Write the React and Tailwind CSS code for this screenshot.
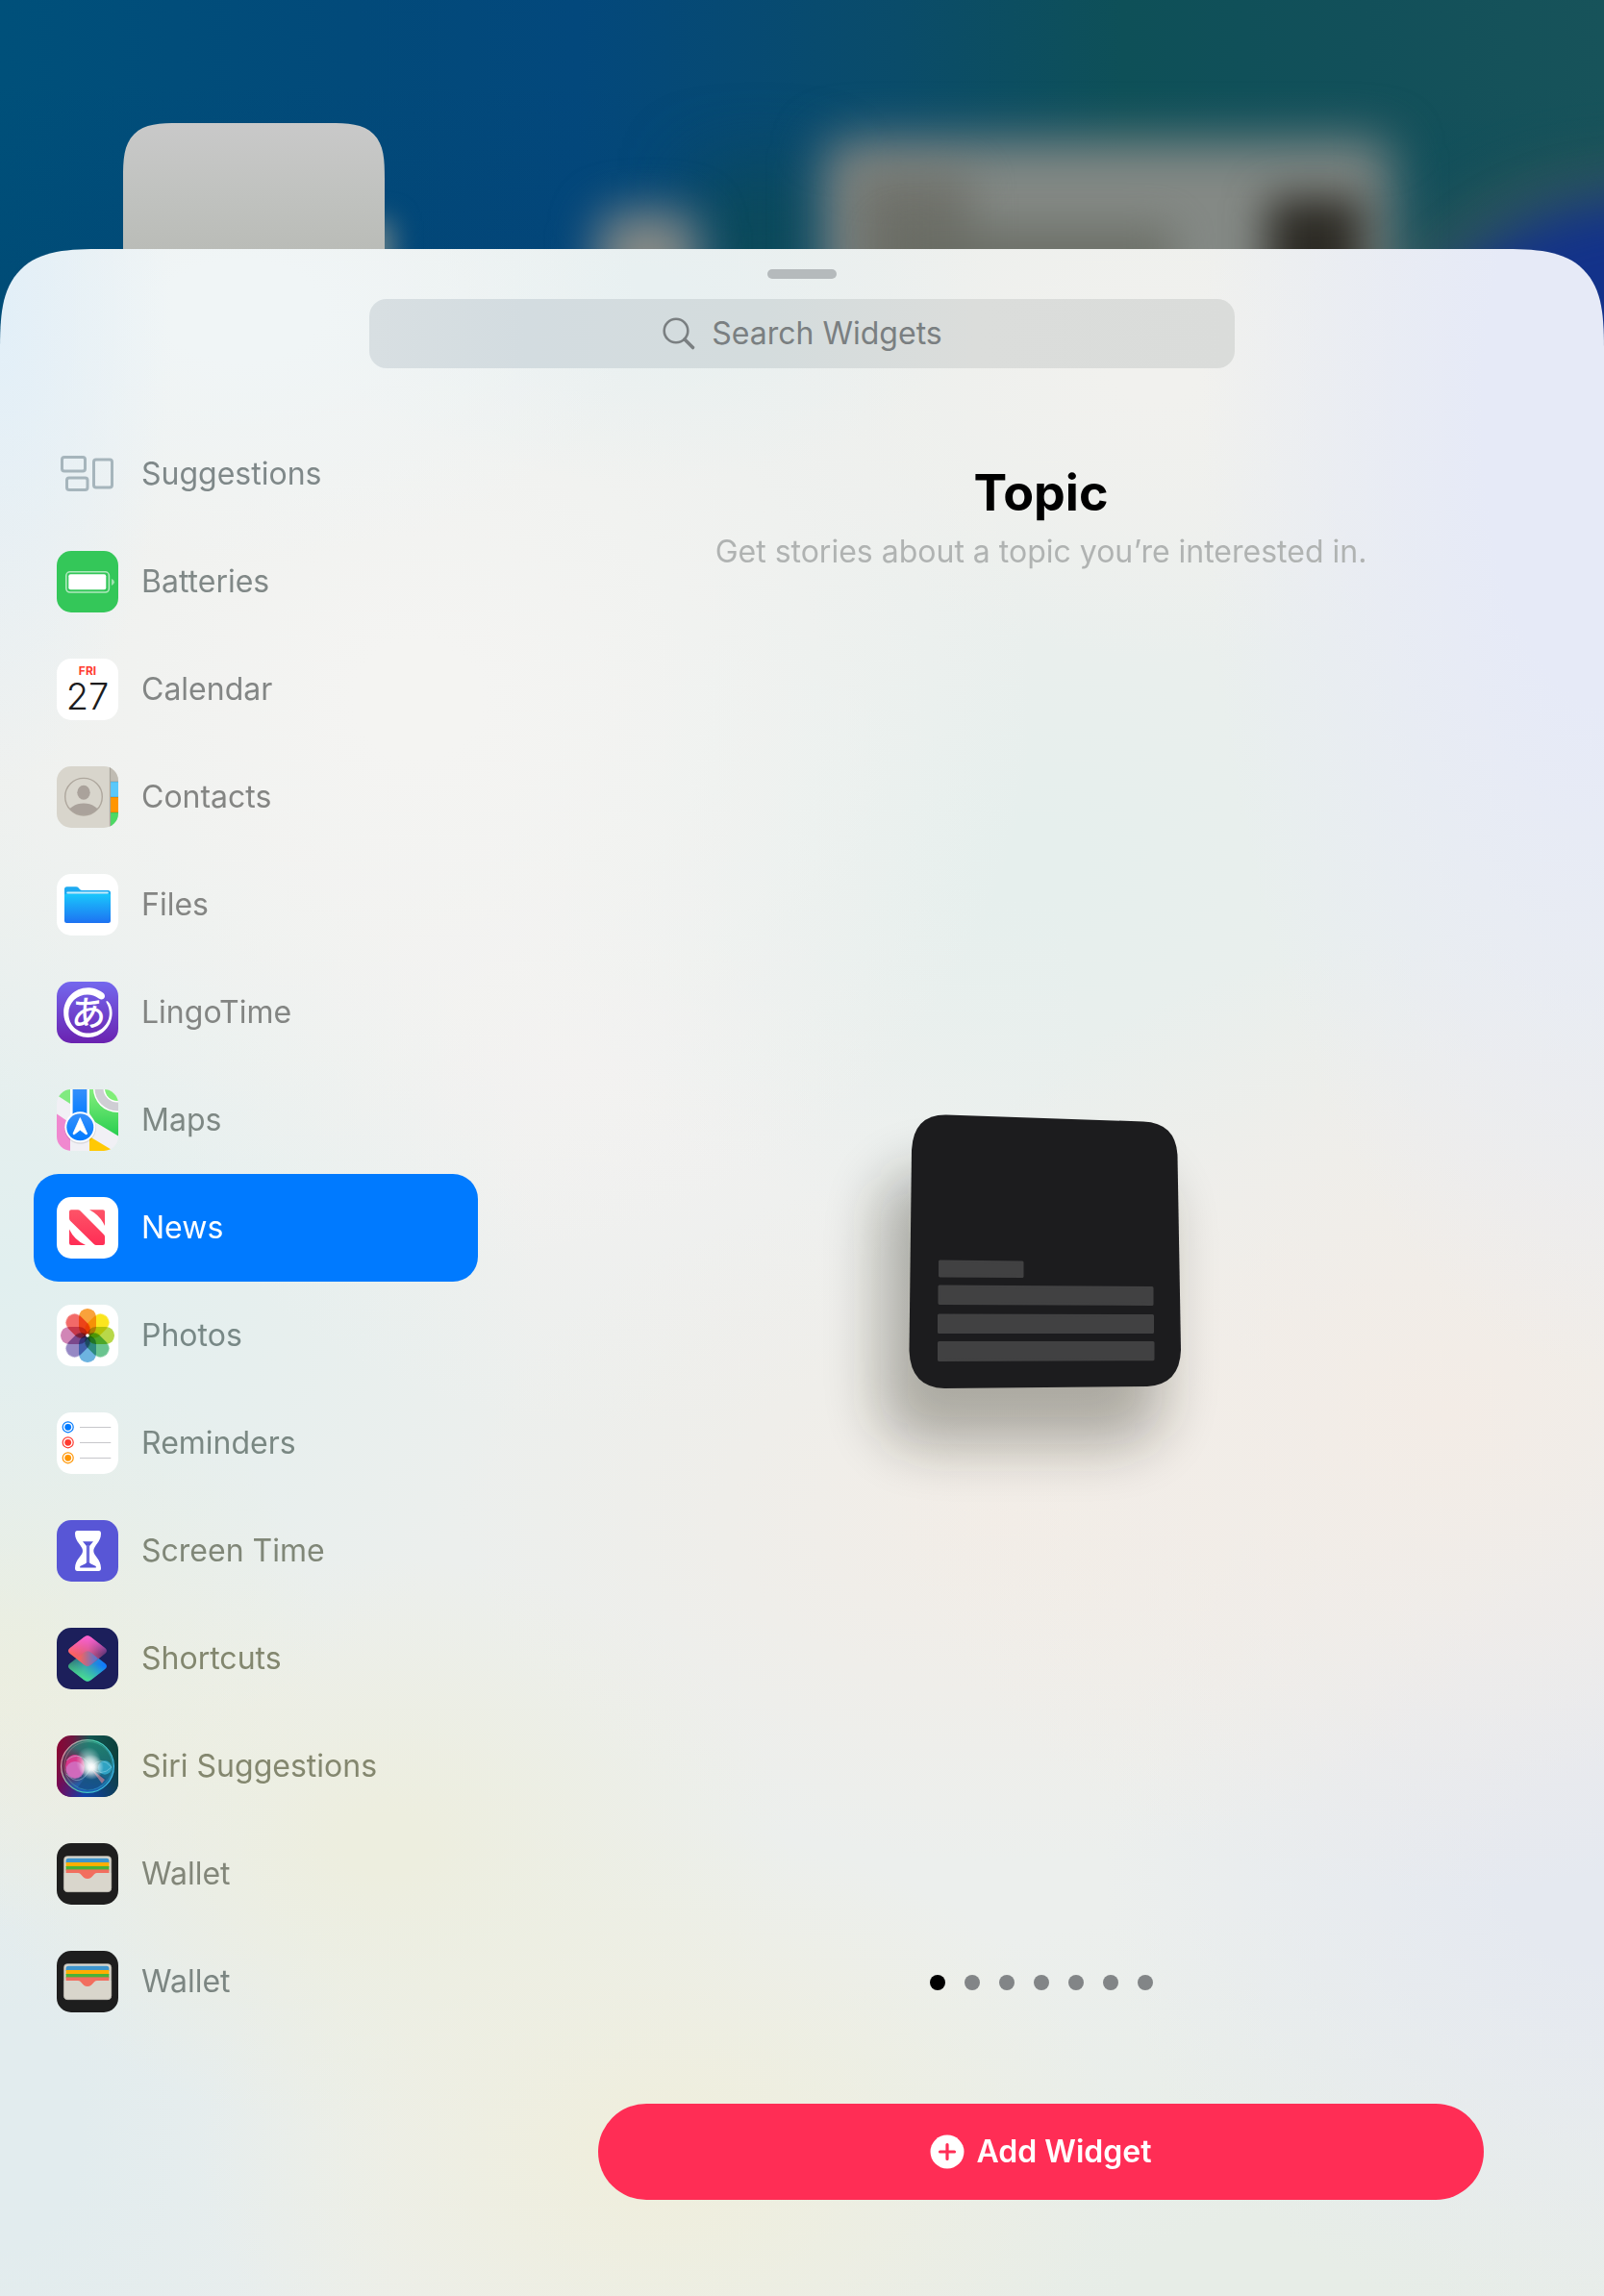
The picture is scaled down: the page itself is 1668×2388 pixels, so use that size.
import React from "react";

function Tile({ children }) {
  return (
    <svg viewBox="0 0 64 64" className="size-16 shrink-0 rounded-[15px]" aria-hidden="true">
      {children}
    </svg>
  );
}

function SuggestionsIcon() {
  return (
    <Tile>
      <g fill="none" stroke="#a6b5bc" strokeWidth="3">
        <rect x="5.5" y="14.5" width="24" height="14.5" rx="2.5" />
        <rect x="38.5" y="17" width="19" height="29" rx="2.5" />
        <rect x="10.5" y="36" width="21.5" height="12.5" rx="2.5" />
      </g>
    </Tile>
  );
}

function BatteriesIcon() {
  return (
    <Tile>
      <rect width="64" height="64" fill="#34c759" />
      <rect x="9.8" y="21.8" width="44.6" height="21.2" rx="4" fill="none" stroke="#b0e9be" strokeWidth="1.6" />
      <rect x="12.3" y="24.3" width="39" height="16" rx="2" fill="#fff" />
      <path d="M57 29 Q60 30.5 60 32.4 Q60 34.3 57 36 Z" fill="#a0e3b0" />
    </Tile>
  );
}

function CalendarIcon() {
  return (
    <Tile>
      <rect width="64" height="64" fill="#fff" />
      <text x="32" y="17" textAnchor="middle" fill="#ff3b30" fontFamily="Inter, sans-serif" fontSize="12" fontWeight="700">
        FRI
      </text>
      <text x="32" y="53" textAnchor="middle" fill="#1c1c1e" fontFamily="Inter, sans-serif" fontSize="38" fontWeight="300">
        27
      </text>
    </Tile>
  );
}

function ContactsIcon() {
  return (
    <Tile>
      <defs>
        <clipPath id="contactHead">
          <circle cx="28" cy="31.7" r="19" />
        </clipPath>
      </defs>
      <rect width="64" height="64" fill="#d8d5cc" />
      <circle cx="28" cy="31.7" r="19.3" fill="none" stroke="#aea79d" strokeWidth="1.4" />
      <ellipse cx="28" cy="27.3" rx="6.7" ry="7.5" fill="#aaa29b" />
      <ellipse cx="28" cy="49" rx="16" ry="10.4" fill="#aaa29b" clipPath="url(#contactHead)" />
      <rect x="55.4" width="9" height="16" fill="#c0bcb3" />
      <rect x="56" y="16" width="8" height="16" fill="#5ac8fa" />
      <rect x="56" y="32" width="8" height="16" fill="#ff9500" />
      <rect x="56" y="48" width="8" height="16" fill="#4cd964" />
      <path d="M55.5 0 V64" stroke="#a9a59c" strokeWidth="1.2" />
      <path d="M56 16 H64 M56 32 H64 M56 48 H64" stroke="#00000030" strokeWidth="0.8" />
    </Tile>
  );
}

function FilesIcon() {
  return (
    <Tile>
      <defs>
        <linearGradient id="folder" x1="0" y1="0" x2="0" y2="1">
          <stop offset="0" stopColor="#1ac8fc" />
          <stop offset="1" stopColor="#1d72f2" />
        </linearGradient>
      </defs>
      <rect width="64" height="64" fill="#fff" />
      <path d="M8 16 Q8 13.3 10.7 13.3 H20 Q21.7 13.3 22.8 14.6 L24 16 Q25 17 26.5 17 H53.3 Q56 17 56 19.7 V30 H8 Z" fill="#1eaaf1" />
      <path d="M8 22 Q8 20.4 10.5 20.4 H53.5 Q56 20.4 56 22 V48.5 Q56 51 53.5 51 H10.5 Q8 51 8 48.5 Z" fill="url(#folder)" />
      <path d="M11.3 19.6 H52.8" stroke="#c4ecfc" strokeWidth="2" strokeLinecap="round" />
    </Tile>
  );
}

function LingoTimeIcon() {
  return (
    <Tile>
      <defs>
        <linearGradient id="lingo" x1="0" y1="0" x2="0" y2="1">
          <stop offset="0" stopColor="#7468ee" />
          <stop offset="1" stopColor="#6a22b0" />
        </linearGradient>
      </defs>
      <rect width="64" height="64" fill="url(#lingo)" />
      <path
        d="M48 11.5 C42 7.5 37 6.3 32.5 6.3 C18 6.3 7.2 18 7.2 32.3 C7.2 46.5 18.5 58 32.6 58 C47 58 57.6 46 57.6 32.5 C57.6 28 56.3 23.5 53.3 20.8 C51.6 19.3 51 20.5 51.8 22 C54 26 54.8 29 54.8 33 C54.8 44.5 45 53.5 33 53.5 C21 53.5 12.3 44.5 12.3 33.2 C12.3 21.5 21 13.4 32 13.4 C36.5 13.4 40 14.5 43.8 17.5 C48.6 20.6 52.6 15 48 11.5 Z"
        fill="#fff"
      />
      <text x="33" y="46" textAnchor="middle" fill="#fff" fontFamily="'Noto Sans CJK JP', sans-serif" fontSize="36" fontWeight="500">
        あ
      </text>
    </Tile>
  );
}

function MapsIcon() {
  return (
    <Tile>
      <defs>
        <linearGradient id="mapGreen" x1="0" y1="0" x2="0" y2="1">
          <stop offset="0" stopColor="#84ee7c" />
          <stop offset="1" stopColor="#28ce50" />
        </linearGradient>
        <linearGradient id="mapBlue" x1="0" y1="0" x2="0" y2="1">
          <stop offset="0" stopColor="#3590fb" />
          <stop offset="1" stopColor="#007aff" />
        </linearGradient>
      </defs>
      <rect width="64" height="64" fill="#f1f0f5" />
      <path d="M0 0 H14 V15 L0 6 Z" fill="#80ea80" />
      <path d="M34 0 H64 V48.5 L40 34 L34 25 Z" fill="url(#mapGreen)" />
      <circle cx="63" cy="-1" r="25" fill="#fff" />
      <circle cx="63" cy="-1" r="23.5" fill="#cfced4" />
      <circle cx="63" cy="-1" r="14.5" fill="#fff" />
      <circle cx="63" cy="-1" r="13" fill="#80ee78" />
      <path d="M0 25.5 L14 35 V64 H0 Z" fill="#f088cf" />
      <path d="M34 49 L56.5 62.5 L54 64 H34 Z" fill="#ffc904" />
      <rect x="14" width="2.6" height="30" fill="#fff" />
      <rect x="31.4" width="2.6" height="30" fill="#fff" />
      <rect x="16.6" width="14.8" height="32" fill="url(#mapBlue)" />
      <circle cx="24.5" cy="40.3" r="16.5" fill="#00000018" />
      <circle cx="24.3" cy="39.3" r="16" fill="#fff" />
      <circle cx="24.3" cy="39.3" r="14" fill="url(#mapBlue)" />
      <path d="M24.3 29.6 L31.6 46 Q31.4 47.4 30 46.6 L24.3 42.2 L18.6 46.6 Q17.2 47.4 17 46 Z" fill="#fff" stroke="#fff" strokeWidth="0.8" strokeLinejoin="round" />
    </Tile>
  );
}

function NewsIcon() {
  return (
    <Tile>
      <defs>
        <linearGradient id="news" gradientUnits="userSpaceOnUse" x1="0" y1="13" x2="0" y2="50">
          <stop offset="0" stopColor="#fd5468" />
          <stop offset="1" stopColor="#ff2d55" />
        </linearGradient>
      </defs>
      <rect width="64" height="64" fill="#fff" />
      <g fill="url(#news)">
        <path d="M13 15.3 Q13 13.3 15 13.3 H22 Q23.4 13.3 24.4 14.3 L49 39 Q50 40 50 41.4 V48 Q50 50 48 50 H41 Q39.7 50 38.7 49 L14 24.7 Q13 23.7 13 22.3 Z" />
        <path d="M34 13.3 H48 Q50 13.3 50 15.3 V30 Q45 19 34 13.3 Z" />
        <path d="M13 33.5 Q18.5 45 30 50 H15 Q13 50 13 48 Z" />
      </g>
    </Tile>
  );
}

const petals = [
  { angle: 0, fill: "#f9a23b" },
  { angle: 45, fill: "#fbe51e" },
  { angle: 90, fill: "#b8d849" },
  { angle: 135, fill: "#6ac48f" },
  { angle: 180, fill: "#6db3e0" },
  { angle: 225, fill: "#9688c4" },
  { angle: 270, fill: "#d186b6" },
  { angle: 315, fill: "#f26a68" },
];

function PhotosIcon() {
  return (
    <Tile>
      <rect width="64" height="64" fill="#fff" />
      {petals.map((petal) => (
        <rect
          key={petal.angle}
          x="23"
          y="4"
          width="18"
          height="28"
          rx="8.8"
          fill={petal.fill}
          transform={`rotate(${petal.angle} 32 32)`}
          className="mix-blend-multiply"
        />
      ))}
      <circle cx="32" cy="32" r="1.8" fill="#fff" />
    </Tile>
  );
}

const reminderLines = [
  { y: 15.3, color: "#007aff" },
  { y: 31.3, color: "#ff3b30" },
  { y: 47.3, color: "#ff9500" },
];

function RemindersIcon() {
  return (
    <Tile>
      <rect width="64" height="64" fill="#fff" />
      {reminderLines.map((line) => (
        <g key={line.y}>
          <circle cx="11.7" cy={line.y} r="5.5" fill="none" stroke={line.color} strokeWidth="1.2" />
          <circle cx="11.7" cy={line.y} r="3.4" fill={line.color} />
          <path d={`M24 ${line.y + 0.2} H56.3`} stroke="#c7c7cb" strokeWidth="1" />
        </g>
      ))}
    </Tile>
  );
}

function ScreenTimeIcon() {
  return (
    <Tile>
      <rect width="64" height="64" fill="#5856d6" />
      <path
        d="M21.5 11 H43.5 Q46 11 46 14 C46 23 38.3 26.5 38.3 32 C38.3 37.5 46 40.5 46 50 Q46 53 43.5 53 H21.5 Q19 53 19 50 C19 40.5 27 37.5 27 32 C27 26.5 19 23 19 14 Q19 11 21.5 11 Z"
        fill="#fff"
      />
      <path d="M27 22.3 H38 L34 27 V43.8 Q34 45 35.5 45.6 L40.8 48 V49.6 H24.2 V48 L29.5 45.6 Q31 45 31 43.8 V27 Z" fill="#5856d6" />
      <path d="M32.5 26 V44" stroke="#fff" strokeWidth="0.7" opacity="0.4" />
    </Tile>
  );
}

function ShortcutsIcon() {
  return (
    <Tile>
      <defs>
        <linearGradient id="scLow" gradientUnits="userSpaceOnUse" x1="16" y1="32" x2="48" y2="42">
          <stop offset="0" stopColor="#2d6472" />
          <stop offset="0.45" stopColor="#3596b5" />
          <stop offset="1" stopColor="#0f7bff" />
        </linearGradient>
        <linearGradient id="scGreen" gradientUnits="userSpaceOnUse" x1="30" y1="56" x2="36" y2="36">
          <stop offset="0" stopColor="#4be38d" />
          <stop offset="1" stopColor="#4be38d" stopOpacity="0" />
        </linearGradient>
        <linearGradient id="scTop" gradientUnits="userSpaceOnUse" x1="14" y1="26" x2="52" y2="24">
          <stop offset="0" stopColor="#ff6257" />
          <stop offset="0.5" stopColor="#d85a86" />
          <stop offset="1" stopColor="#4f2f74" />
        </linearGradient>
        <linearGradient id="scPink" gradientUnits="userSpaceOnUse" x1="32" y1="8" x2="32" y2="28">
          <stop offset="0" stopColor="#fa60d8" />
          <stop offset="1" stopColor="#fa60d8" stopOpacity="0" />
        </linearGradient>
        <linearGradient id="scMix" gradientUnits="userSpaceOnUse" x1="24" y1="32" x2="42" y2="32">
          <stop offset="0" stopColor="#f4645f" />
          <stop offset="1" stopColor="#5277d4" />
        </linearGradient>
      </defs>
      <rect width="64" height="64" fill="#1c1f5b" />
      <path d="M28 26 Q32 22.6 36 26 L50.2 37 Q53.8 40 50.2 43 L36 54 Q32 57.4 28 54 L13.8 43 Q10.2 40 13.8 37 Z" fill="url(#scLow)" />
      <path d="M28 26 Q32 22.6 36 26 L50.2 37 Q53.8 40 50.2 43 L36 54 Q32 57.4 28 54 L13.8 43 Q10.2 40 13.8 37 Z" fill="url(#scGreen)" />
      <path d="M28 10 Q32 6.6 36 10 L50.2 21 Q53.8 24 50.2 27 L36 38 Q32 41.4 28 38 L13.8 27 Q10.2 24 13.8 21 Z" fill="url(#scTop)" />
      <path d="M28 10 Q32 6.6 36 10 L50.2 21 Q53.8 24 50.2 27 L36 38 Q32 41.4 28 38 L13.8 27 Q10.2 24 13.8 21 Z" fill="url(#scPink)" />
      <path d="M28 26 Q32 22.6 36 26 L43 32 L36 38 Q32 41.4 28 38 L21 32 Z" fill="url(#scMix)" />
    </Tile>
  );
}

function SiriIcon() {
  return (
    <Tile>
      <defs>
        <linearGradient id="siriTop" x1="0" y1="0" x2="1" y2="0">
          <stop offset="0" stopColor="#8b0635" />
          <stop offset="0.25" stopColor="#6f1540" />
          <stop offset="0.55" stopColor="#11544f" />
          <stop offset="1" stopColor="#0d3f3b" />
        </linearGradient>
        <linearGradient id="siriLow" x1="0" y1="0" x2="1" y2="0">
          <stop offset="0" stopColor="#74085f" />
          <stop offset="0.45" stopColor="#0f41ad" />
          <stop offset="1" stopColor="#103f5a" />
        </linearGradient>
        <linearGradient id="siriFade" x1="0" y1="0" x2="0" y2="1">
          <stop offset="0.35" stopColor="#fff" stopOpacity="0" />
          <stop offset="1" stopColor="#fff" />
        </linearGradient>
        <mask id="siriMask">
          <rect width="64" height="64" fill="url(#siriFade)" />
        </mask>
        <linearGradient id="siriRing" x1="0" y1="0.2" x2="1" y2="0.6">
          <stop offset="0" stopColor="#e892a4" />
          <stop offset="0.5" stopColor="#4cd0ae" />
          <stop offset="1" stopColor="#3cb8ea" />
        </linearGradient>
        <linearGradient id="siriBall" x1="0" y1="0" x2="0" y2="1">
          <stop offset="0" stopColor="#2c9a83" />
          <stop offset="0.55" stopColor="#207f8c" />
          <stop offset="1" stopColor="#1c6ed0" />
        </linearGradient>
        <radialGradient id="siriRed">
          <stop offset="0.3" stopColor="#7c1440" stopOpacity="0.8" />
          <stop offset="1" stopColor="#7c1440" stopOpacity="0" />
        </radialGradient>
        <radialGradient id="siriGlow">
          <stop offset="0" stopColor="#fff" />
          <stop offset="0.25" stopColor="#fff" stopOpacity="0.9" />
          <stop offset="1" stopColor="#fff" stopOpacity="0" />
        </radialGradient>
      </defs>
      <rect width="64" height="64" fill="url(#siriTop)" />
      <rect width="64" height="64" fill="url(#siriLow)" mask="url(#siriMask)" />
      <circle cx="32" cy="32" r="27" fill="url(#siriBall)" opacity="0.65" />
      <circle cx="14" cy="32" r="20" fill="url(#siriRed)" />
      <circle cx="32" cy="32" r="27.4" fill="none" stroke="url(#siriRing)" strokeWidth="1.3" />
      <circle cx="33" cy="31.5" r="25" fill="none" stroke="url(#siriRing)" strokeWidth="0.6" opacity="0.7" />
      <ellipse cx="19" cy="32" rx="10" ry="12" fill="#ec3c97" opacity="0.85" />
      <ellipse cx="19" cy="36" rx="9.5" ry="9" fill="#cf7fd0" opacity="0.7" />
      <circle cx="50" cy="33.5" r="7.2" fill="#38b5dc" opacity="0.75" />
      <path d="M22 54 Q29 44 36 35 L51 45 Q45 56 32 57 Z" fill="#174a78" opacity="0.6" />
      <path d="M36 35 L50 46 L47 50 Z" fill="#e68c9c" opacity="0.6" />
      <path d="M10 26 Q24 14 36 33 Q24 56 10 40 M36 33 Q46 20 57 33 Q46 44 36 33" fill="none" stroke="#b9e6f2" strokeWidth="0.6" opacity="0.7" />
      <ellipse cx="33" cy="27" rx="13" ry="15" fill="url(#siriGlow)" opacity="0.6" />
      <circle cx="36" cy="33" r="13" fill="url(#siriGlow)" />
    </Tile>
  );
}

function WalletIcon() {
  return (
    <Tile>
      <defs>
        <clipPath id="walletCards">
          <rect x="9.6" y="15.8" width="44.8" height="26" rx="2.5" />
        </clipPath>
      </defs>
      <rect width="64" height="64" fill="#1e1e1e" />
      <rect x="7.4" y="13.5" width="49.4" height="37.2" rx="4" fill="#d9d6cc" />
      <g clipPath="url(#walletCards)">
        <rect x="9" y="15" width="46" height="6" fill="#3e95cd" />
        <rect x="9" y="20" width="46" height="5" fill="#ffae01" />
        <rect x="9" y="24" width="46" height="4.4" fill="#4ab238" />
        <rect x="9" y="27.4" width="46" height="12" fill="#f26e5f" />
      </g>
      <path d="M7.4 31 H22 C26.5 31 26 37 32 37 C38 37 37.5 31 42 31 H56.8 V46.7 Q56.8 50.7 52.8 50.7 H11.4 Q7.4 50.7 7.4 46.7 Z" fill="#d9d6cc" />
      <rect x="7.4" y="13.5" width="49.4" height="37.2" rx="4" fill="none" stroke="#a5a39c" strokeWidth="0.6" />
    </Tile>
  );
}

const apps = [
  { id: "suggestions", name: "Suggestions", Icon: SuggestionsIcon, tone: "text-[#7f8889]" },
  { id: "batteries", name: "Batteries", Icon: BatteriesIcon, tone: "text-[#808887]" },
  { id: "calendar", name: "Calendar", Icon: CalendarIcon, tone: "text-[#838685]" },
  { id: "contacts", name: "Contacts", Icon: ContactsIcon, tone: "text-[#848583]" },
  { id: "files", name: "Files", Icon: FilesIcon, tone: "text-[#848583]" },
  { id: "lingotime", name: "LingoTime", Icon: LingoTimeIcon, tone: "text-[#838583]" },
  { id: "maps", name: "Maps", Icon: MapsIcon, tone: "text-[#7e8884]" },
  { id: "news", name: "News", Icon: NewsIcon, tone: "text-white", selected: true },
  { id: "photos", name: "Photos", Icon: PhotosIcon, tone: "text-[#788886]" },
  { id: "reminders", name: "Reminders", Icon: RemindersIcon, tone: "text-[#7a8883]" },
  { id: "screentime", name: "Screen Time", Icon: ScreenTimeIcon, tone: "text-[#808778]" },
  { id: "shortcuts", name: "Shortcuts", Icon: ShortcutsIcon, tone: "text-[#83876f]" },
  { id: "siri", name: "Siri Suggestions", Icon: SiriIcon, tone: "text-[#84876f]" },
  { id: "wallet", name: "Wallet", Icon: WalletIcon, tone: "text-[#828679]" },
  { id: "wallet-passes", name: "Wallet", Icon: WalletIcon, tone: "text-[#7c8682]" },
];

function HomeScreen() {
  return (
    <div className="absolute inset-x-0 top-0 h-[420px] overflow-hidden bg-[linear-gradient(90deg,#00507a_0%,#024a7a_22%,#03487c_36%,#0a4c6a_56%,#0e5058_70%,#12505a_85%,#17535a_100%)]" aria-hidden="true">
      <div className="absolute inset-0 bg-[linear-gradient(180deg,transparent_20%,#00306020_70%)]" />
      <div className="absolute left-[1370px] top-[170px] size-[640px] rounded-full bg-[#3c5a58] opacity-70 blur-[30px]" />
      <div className="absolute left-[1430px] top-[205px] size-[560px] rounded-full bg-[#13328a] blur-[28px]" />
      <div className="absolute left-[730px] top-[180px] h-[220px] w-[120px] bg-[#0c4a58] blur-2xl" />
      <div className="absolute left-[858px] top-[146px] h-[300px] w-[588px] rounded-2xl bg-[#848985] blur-[26px]" />
      <div className="absolute left-[890px] top-[180px] h-[260px] w-[120px] bg-[#6a6b64] opacity-80 blur-[24px]" />
      <div className="absolute left-[920px] top-[235px] h-[200px] w-[300px] bg-[#686b62] opacity-80 blur-[22px]" />
      <div className="absolute left-[1318px] top-[205px] h-[200px] w-[100px] rounded-lg bg-[#2c2a24] blur-[22px]" />
      <div className="absolute left-[622px] top-[220px] h-[160px] w-[104px] rounded-3xl bg-[#868a86] blur-[24px]" />
      <div className="absolute left-[360px] top-[230px] h-[160px] w-[48px] bg-[#6a8288] blur-[14px]" />
      <div className="absolute left-[128px] top-[128px] h-[272px] w-[272px] rounded-[40px] bg-[linear-gradient(180deg,#c9c9c9_0%,#c0c2bf_28%,#b8bab5_55%)] supports-[corner-shape:squircle]:rounded-[58px] supports-[corner-shape:squircle]:[corner-shape:superellipse(1.65)]" />
    </div>
  );
}

function WidgetPreview() {
  return (
    <svg viewBox="0 0 290 290" className="h-[290px] w-[290px] overflow-visible" role="img" aria-label="Topic widget preview">
      <defs>
        <filter id="soft" x="-60%" y="-60%" width="220%" height="220%">
          <feGaussianBlur stdDeviation="30" />
        </filter>
      </defs>
      <rect x="-22" y="62" width="292" height="282" rx="44" fill="#1c1f10" opacity="0.32" filter="url(#soft)" />
      <path
        d="M46 1.5 L251 8.5 Q285 10 286.5 44 L290 246 Q289 282 255 284 L44 286 Q9 285 7.5 247 L10 38 Q12 1 46 1.5 Z"
        fill="#1c1c1e"
      />
      <g fill="#414142" stroke="#414142" strokeWidth="3" strokeLinejoin="round">
        <path d="M39.5 154 L125 155 V169.5 L39.5 169 Z" />
        <path d="M39 180 L260 181.5 V198.5 L39 197.5 Z" />
        <path d="M38.5 210 L260.5 210.5 V227.5 L38.5 227.5 Z" />
        <path d="M38.5 238.5 H261 V255.7 L38.5 256.5 Z" />
      </g>
    </svg>
  );
}

function PageDots({ count, current }) {
  return (
    <div className="flex gap-5" role="tablist" aria-label="Widget pages">
      {Array.from({ length: count }, (_, i) => (
        <button
          key={i}
          type="button"
          role="tab"
          aria-selected={i === current}
          aria-label={`Page ${i + 1}`}
          className={i === current ? "size-4 rounded-full bg-black" : "size-4 rounded-full bg-[#828587]"}
        />
      ))}
    </div>
  );
}

export default function App() {
  return (
    <div className="relative flex min-h-screen flex-col pt-[259px] font-['Inter',sans-serif]">
      <HomeScreen />
      <main className="relative flex flex-1 flex-col overflow-hidden rounded-t-[74px] bg-[#ecefed] bg-[radial-gradient(ellipse_180px_500px_at_0%_3%,#e2eff8_0%,transparent_100%),radial-gradient(ellipse_420px_260px_at_15%_3%,#f0f5f6_20%,transparent_100%),radial-gradient(ellipse_360px_200px_at_40%_2%,#e8f0f1_10%,transparent_100%),radial-gradient(ellipse_420px_1000px_at_100%_8%,#e6eaf7_30%,transparent_100%),radial-gradient(ellipse_420px_300px_at_72%_6%,#f1f1ee_10%,transparent_100%),radial-gradient(ellipse_650px_600px_at_26%_22%,#f4f4f2_10%,transparent_100%),radial-gradient(ellipse_560px_520px_at_0%_50%,#e1efef_0%,transparent_100%),radial-gradient(ellipse_600px_500px_at_90%_57%,#f3ece6_0%,transparent_100%),radial-gradient(ellipse_560px_360px_at_62%_62%,#f2ede7_0%,transparent_100%),radial-gradient(ellipse_560px_380px_at_64%_30%,#e6efed_10%,transparent_100%),radial-gradient(ellipse_500px_420px_at_38%_38%,#f2f1f0_10%,transparent_100%),radial-gradient(ellipse_340px_300px_at_0%_68%,#eeeedd_10%,transparent_100%),radial-gradient(ellipse_420px_300px_at_24%_78%,#edeedf_10%,transparent_100%),radial-gradient(ellipse_480px_340px_at_41%_93%,#efeedd_10%,transparent_100%),radial-gradient(ellipse_420px_600px_at_0%_92%,#e2ecee_20%,transparent_100%),radial-gradient(ellipse_520px_500px_at_100%_79%,#e5e9f0_20%,transparent_100%),radial-gradient(ellipse_800px_400px_at_80%_100%,#e7ede7_20%,transparent_100%)] supports-[corner-shape:squircle]:rounded-t-[108px] supports-[corner-shape:squircle]:[corner-shape:superellipse(1.65)]">
        <header className="flex flex-col items-center pt-[21px]">
          <div className="h-[10px] w-[72px] rounded-full bg-[#b5babc]" />
          <label className="mt-[21px] flex h-[72px] w-[54%] items-center justify-center gap-4 rounded-[18px] bg-[linear-gradient(90deg,#d8dfe2_0%,#d3dce0_18%,#d4dcdd_45%,#dbdddb_70%,#dadcda_100%)] text-[#7a7f81]">
            <svg viewBox="0 0 36 36" className="size-9 shrink-0" fill="none" stroke="currentColor" strokeWidth="2.6" strokeLinecap="round" aria-hidden="true">
              <circle cx="15" cy="15" r="12.3" />
              <path d="M24 24 L32.5 32.500" strokeWidth="3.6" />
            </svg>
            <input
              type="search"
              aria-label="Search Widgets"
              placeholder="Search Widgets"
              className="field-sizing-content bg-transparent text-[32px] leading-10 outline-none placeholder:text-[#7a7f81]"
            />
          </label>
        </header>

        <div className="flex flex-1 pt-[54px]">
          <nav className="w-[497px] shrink-0 pl-[35px]" aria-label="Widget apps">
            <ul>
              {apps.map(({ id, name, Icon, tone, selected }) => (
                <li key={id}>
                  <button
                    type="button"
                    aria-current={selected ? "true" : undefined}
                    className={
                      selected
                        ? "flex h-28 w-full items-center gap-6 rounded-[26px] bg-[#007aff] px-6 text-left"
                        : "flex h-28 w-full items-center gap-6 rounded-[26px] px-6 text-left"
                    }
                  >
                    <Icon />
                    <span className={`text-[32px] leading-10 ${tone}`}>{name}</span>
                  </button>
                </li>
              ))}
            </ul>
          </nav>

          <section className="flex flex-1 flex-col items-center pb-[100px] pt-[40px]">
            <h1 className="text-[52px] font-bold leading-[72px] text-black">Topic</h1>
            <p className="text-[32px] leading-[50px] text-[#b0b3b2]">Get stories about a topic you’re interested in.</p>
            <div className="flex w-full flex-1 items-center justify-center pb-12">
              <WidgetPreview />
            </div>
            <PageDots count={7} current={0} />
            <div className="mt-[118px] w-full px-[125px]">
              <button type="button" className="flex h-[100px] w-full items-center justify-center gap-3 rounded-[50px] bg-[#ff2d55] text-[32px] font-semibold leading-10 text-white">
                <svg viewBox="0 0 36 36" className="size-9" aria-hidden="true">
                  <circle cx="18" cy="18" r="17.500" fill="#fff" />
                  <path d="M18 10.500 V25.500 M10.500 18 H25.500" stroke="#ff2d55" strokeWidth="3.200" strokeLinecap="round" />
                </svg>
                Add Widget
              </button>
            </div>
          </section>
        </div>
      </main>
    </div>
  );
}
